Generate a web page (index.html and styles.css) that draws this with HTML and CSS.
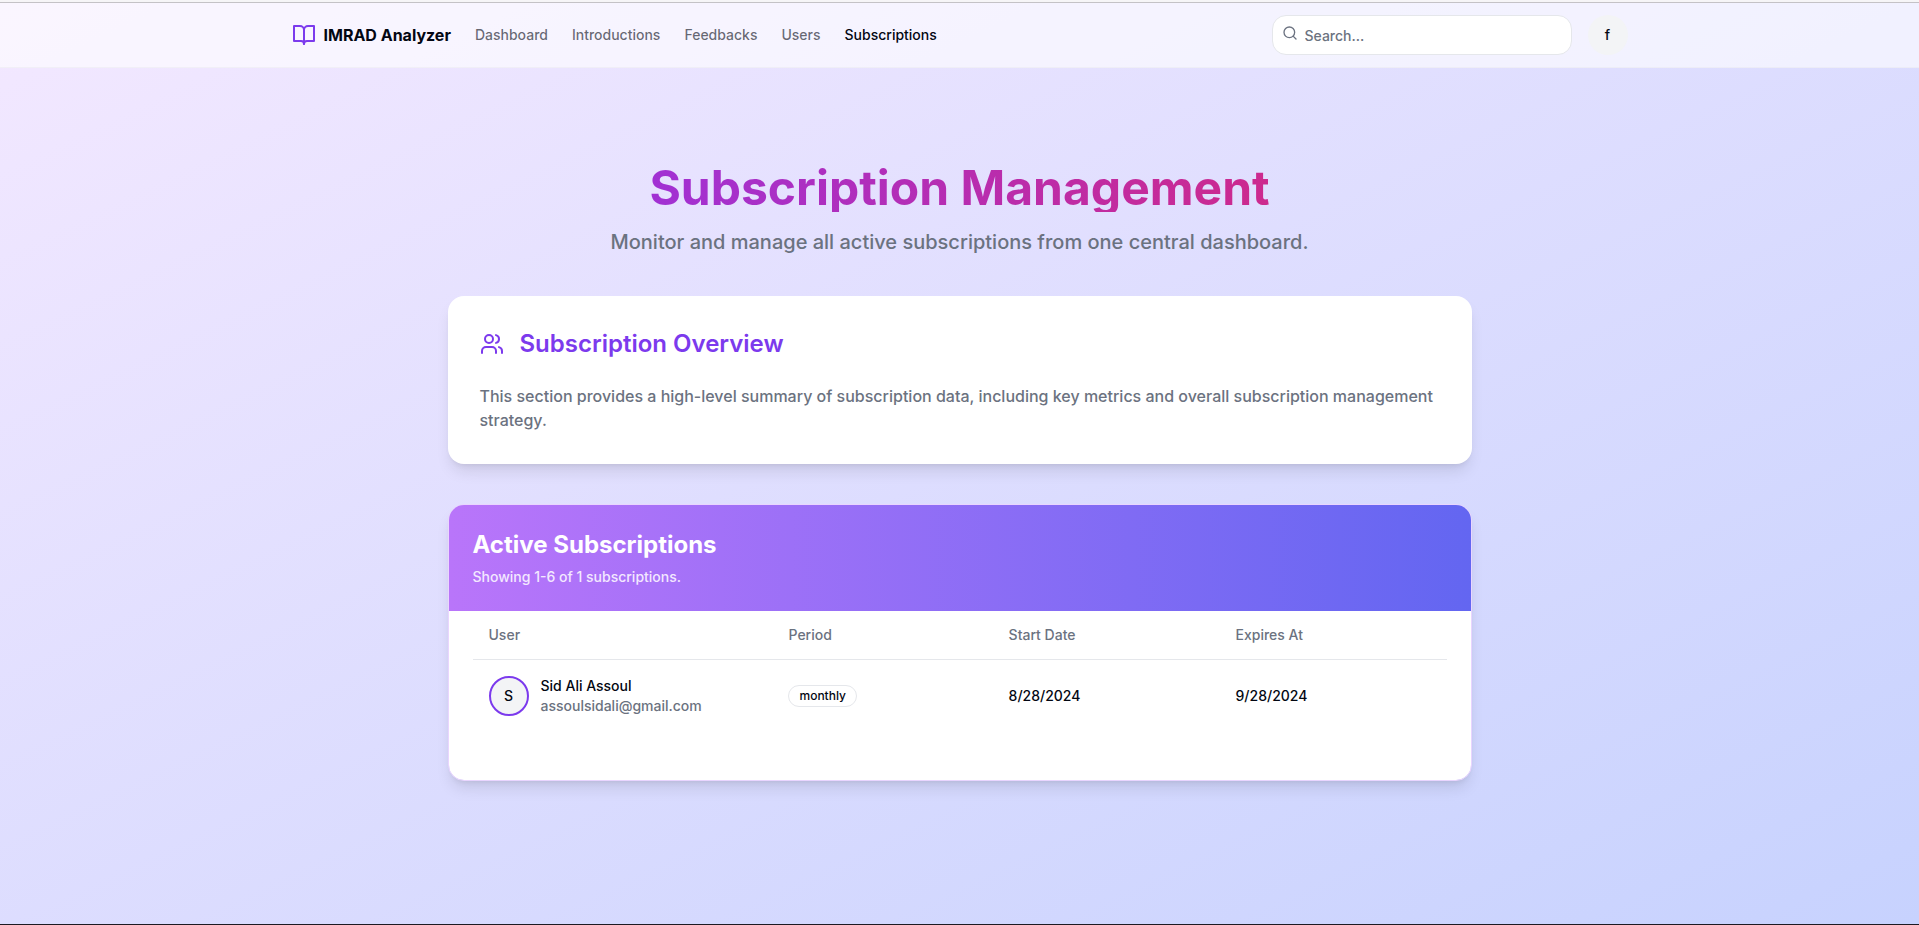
FILE: index.html
```html
<!DOCTYPE html>
<html lang="en">
<head>
<meta charset="utf-8">
<meta name="viewport" content="width=device-width, initial-scale=1">
<title>IMRAD Analyzer - Subscriptions</title>
<link rel="stylesheet" href="styles.css">
</head>
<body>
<div class="top-edge"></div>
<div class="page">
  <header class="site-header">
    <div class="header-inner">
      <a class="brand" href="#">
        <svg class="icon icon-brand" viewBox="0 0 24 24" aria-hidden="true"><path d="M2 3h6a4 4 0 0 1 4 4v14a3 3 0 0 0-3-3H2z"/><path d="M22 3h-6a4 4 0 0 0-4 4v14a3 3 0 0 1 3-3h7z"/></svg>
        <span>IMRAD Analyzer</span>
      </a>
      <nav class="nav">
        <a href="#">Dashboard</a>
        <a href="#">Introductions</a>
        <a href="#">Feedbacks</a>
        <a href="#">Users</a>
        <a class="active" href="#" aria-current="page">Subscriptions</a>
      </nav>
      <div class="header-tools">
        <form class="search">
          <svg class="icon icon-search" viewBox="0 0 24 24" aria-hidden="true"><circle cx="11" cy="11" r="8"/><path d="m21 21-4.3-4.3"/></svg>
          <input type="search" placeholder="Search..." aria-label="Search">
        </form>
        <button class="account" type="button" aria-label="Account">f</button>
      </div>
    </div>
  </header>
  <main class="main">
    <div class="intro">
      <h1>Subscription Management</h1>
      <p>Monitor and manage all active subscriptions from one central dashboard.</p>
    </div>
    <section class="card overview">
      <h2><svg class="icon icon-users" viewBox="0 0 24 24" aria-hidden="true"><path d="M16 21v-2a4 4 0 0 0-4-4H6a4 4 0 0 0-4 4v2"/><circle cx="9" cy="7" r="4"/><path d="M22 21v-2a4 4 0 0 0-3-3.87"/><path d="M16 3.13a4 4 0 0 1 0 7.75"/></svg>Subscription Overview</h2>
      <p>This section provides a high-level summary of subscription data, including key metrics and overall subscription management strategy.</p>
    </section>
    <section class="card listing">
      <div class="listing-head">
        <h2>Active Subscriptions</h2>
        <p>Showing 1-6 of 1 subscriptions.</p>
      </div>
      <div class="listing-body">
        <table>
          <thead>
            <tr><th class="col-user" scope="col">User</th><th class="col-period" scope="col">Period</th><th class="col-date" scope="col">Start Date</th><th class="col-date" scope="col">Expires At</th></tr>
          </thead>
          <tbody>
            <tr>
              <td><div class="user"><span class="avatar">S</span><div><div>Sid Ali Assoul</div><div class="email">assoulsidali@gmail.com</div></div></div></td>
              <td><span class="badge">monthly</span></td>
              <td>8/28/2024</td>
              <td>9/28/2024</td>
            </tr>
          </tbody>
        </table>
      </div>
    </section>
  </main>
</div>
</body>
</html>
```
FILE: styles.css
```css
* { box-sizing: border-box; }
body {
  margin: 0;
  min-height: 100vh;
  display: flex;
  flex-direction: column;
  font-family: Inter, "Liberation Sans", sans-serif;
  font-size: 14px;
  line-height: 20px;
  font-weight: 500;
  color: #030712;
  border-bottom: 1px solid #1c1a22;
}
h1, h2, p { margin: 0; }
a { color: inherit; text-decoration: none; }
.icon { fill: none; stroke: currentColor; stroke-width: 2; stroke-linecap: round; stroke-linejoin: round; flex: none; }
.top-edge { height: 3px; background: #f6f5f7; border-bottom: 1px solid #c4c2c6; }
.page { flex: 1; background: linear-gradient(to bottom right, #f3e8ff, #c7d2fe); }

.site-header { background: rgba(255, 255, 255, 0.6); border-bottom: 1px solid rgba(229, 231, 235, 0.4); }
.header-inner {
  height: 64px;
  max-width: 1400px;
  margin: 0 auto;
  padding: 0 32px;
  display: flex;
  align-items: center;
}
.brand { display: flex; align-items: center; gap: 8px; margin-right: 24px; font-size: 16px; line-height: 24px; font-weight: 700; color: #030712; }
.icon-brand { width: 24px; height: 24px; color: #7c3aed; }
.nav { display: flex; gap: 24px; color: rgba(3, 7, 18, 0.6); }
.nav .active { color: #030712; }
.header-tools { margin-left: auto; display: flex; gap: 16px; }
.search { position: relative; }
.icon-search { position: absolute; left: 10px; top: 10px; width: 16px; height: 16px; color: #6b7280; }
.search input {
  display: block;
  width: 300px;
  height: 40px;
  padding: 8px 12px 8px 32px;
  font: inherit;
  color: inherit;
  background: #fff;
  border: 1px solid #e5e7eb;
  border-radius: 14px;
  appearance: none;
}
.search input::placeholder { color: #6b7280; opacity: 1; }
.account { width: 40px; height: 40px; padding: 0; border: 0; border-radius: 50%; background: #f3f4f6; font: inherit; color: inherit; }

.main { max-width: 1024px; margin: 0 auto; padding: 96px 0; display: flex; flex-direction: column; gap: 40px; }
.intro { display: flex; flex-direction: column; gap: 16px; text-align: center; }
.intro h1 {
  font-size: 48px;
  line-height: 48px;
  font-weight: 700;
  color: transparent;
  background: linear-gradient(to right, #9333ea, #db2777);
  -webkit-background-clip: text;
  background-clip: text;
}
.intro p { font-size: 20px; line-height: 28px; color: #6b7280; }

.card { background: #fff; border-radius: 16px; box-shadow: 0 10px 15px -3px rgba(0, 0, 0, 0.1), 0 4px 6px -4px rgba(0, 0, 0, 0.1); }
.overview { padding: 32px; display: flex; flex-direction: column; gap: 24px; }
.overview h2 { display: flex; align-items: center; gap: 16px; font-size: 24px; line-height: 32px; font-weight: 600; color: #7c3aed; }
.icon-users { width: 24px; height: 24px; }
.overview p { font-size: 16px; line-height: 24px; color: #6b7280; }

.listing { border: 1px solid #e9d5ff; overflow: hidden; background-clip: padding-box; }
.listing-head { padding: 24px; display: flex; flex-direction: column; gap: 6px; color: #fff; background: linear-gradient(to right, #b975fa, #6366f1); }
.listing-head h2 { font-size: 24px; line-height: 32px; font-weight: 700; }
.listing-head p { color: #f3e8ff; }
.listing-body { padding: 0 24px 48px; }
table { width: 100%; border-collapse: collapse; table-layout: fixed; }
th { height: 48px; padding: 0 16px; text-align: left; font-weight: 500; color: #6b7280; }
thead tr { border-bottom: 1px solid #e5e7eb; }
td { padding: 16px; }
.col-user { width: 30.8%; }
.col-period { width: 22.6%; }
.col-date { width: 23.3%; }
.user { display: flex; align-items: center; gap: 12px; }
.email { color: #6b7280; }
.avatar { width: 40px; height: 40px; flex: none; display: flex; align-items: center; justify-content: center; border: 2px solid #7c3aed; border-radius: 50%; background: #f3f4f6; }
.badge { display: inline-block; padding: 2px 10px; border: 1px solid #e5e7eb; border-radius: 11px; font-size: 12px; line-height: 16px; font-weight: 500; }
```
